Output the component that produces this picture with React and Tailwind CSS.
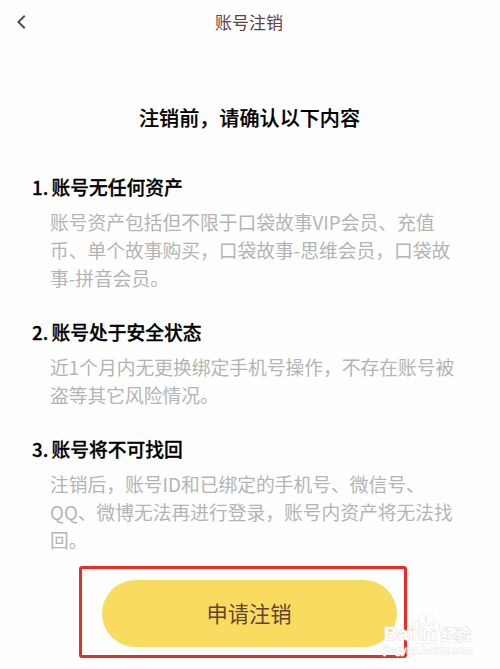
import React from "react";

const SECTIONS = [
  {
    title: "账号无任何资产",
    lines: ["账号资产包括但不限于口袋故事VIP会员、充值", "币、单个故事购买，口袋故事-思维会员，口袋故", "事-拼音会员。"],
  },
  {
    title: "账号处于安全状态",
    lines: ["近1个月内无更换绑定手机号操作，不存在账号被", "盗等其它风险情况。"],
  },
  {
    title: "账号将不可找回",
    lines: ["注销后，账号ID和已绑定的手机号、微信号、", "QQ、微博无法再进行登录，账号内资产将无法找", "回。"],
  },
];

function Section({ index, title, lines }) {
  return (
    <section>
      <h2 className="flex h-7 items-center text-[18.75px] font-medium leading-7 text-black [-webkit-text-stroke:0.3px_#000]">
        <span className="w-[19.5px]">{index}.</span>
        <span>{title}</span>
      </h2>
      <p className="mt-[7px] pl-[18px] text-[18.75px] font-normal leading-7 text-[#b4b4b4]">
        {lines.map((line) => (
          <span key={line} className="block whitespace-nowrap">{line}</span>
        ))}
      </p>
    </section>
  );
}

function Watermark() {
  return (
    <div className="absolute left-[384px] top-[613px] w-[90px] font-['Liberation_Sans','Noto_Sans_CJK_SC',sans-serif] text-white [-webkit-text-stroke:1.2px_#e2e2e2] [paint-order:stroke_fill]">
      <div className="flex h-8 items-end">
        <span className="w-[27px] pb-[2px] text-[19px] font-bold leading-[18px]">Bai</span>
        <span className="relative h-8 w-[30px]">
          <svg viewBox="0 0 30 32" className="h-8 w-[30px]" fill="#fff" stroke="#dedede" strokeWidth="1">
            <ellipse cx="5.2" cy="12.500" rx="3" ry="4" transform="rotate(-15 5.2 12.500)" />
            <ellipse cx="11.300" cy="6.200" rx="3.300" ry="4.600" />
            <ellipse cx="19" cy="6.500" rx="3.300" ry="4.600" transform="rotate(10 19 6.500)" />
            <ellipse cx="25.500" cy="13.500" rx="3" ry="4" transform="rotate(15 25.500 13.500)" />
            <path d="M15 12.500c-3 0-4 2.400-5.800 4.400C7.100 19 4 20.800 4 24.400c0 3.400 2.200 6 5 6 2.200 0 3.800-.6 6-.6s4 .6 6.200.6c2.800 0 5-2.600 5-6 0-3.600-3.200-5.400-5.200-7.500-1.800-2-3-4.400-6-4.400z" />
          </svg>
          <span className="absolute left-[7px] top-[15px] text-[14px] font-bold leading-[14px]">du</span>
        </span>
        <span className="whitespace-nowrap pb-[3px] text-[15px] font-bold leading-[15px]">经验</span>
      </div>
      <div className="-mt-px text-[11px] leading-3 [-webkit-text-stroke:0.8px_#e6e6e6]">jingyan.baidu.com</div>
    </div>
  );
}

export default function App() {
  return (
    <div className="relative h-[669px] w-[500px] overflow-hidden bg-[#fefefe] font-['Noto_Sans_CJK_SC',sans-serif]">
      <header className="grid h-11 grid-cols-[40px_1fr_42px] items-center text-[#5c4341]">
        <svg viewBox="0 0 10 16" className="ml-[16px] h-4 w-[10px]" fill="none" stroke="currentColor" strokeWidth="1.9">
          <path d="M8.700 1.800 2.400 8l6.300 6.200" />
        </svg>
        <h1 className="text-center text-[17px] leading-6">账号注销</h1>
      </header>

      <main className="pt-[60px]">
        <p className="pr-px text-center text-[20.1px] font-medium leading-7 text-black [-webkit-text-stroke:0.2px_#000]">注销前，请确认以下内容</p>
        <div className="mt-[41px] flex flex-col gap-[26px] pl-[32px]">
          {SECTIONS.map((s, i) => (
            <Section key={s.title} index={i + 1} {...s} />
          ))}
        </div>
        <div className="ml-[79px] mt-[12px] flex h-[92px] w-[328px] items-center justify-center rounded-[3px] border-[3px] border-[#ed2a23] pl-[12px] pt-[2px]">
          <button className="h-[67px] w-[295px] rounded-full bg-[#f8dc60] pb-px text-[21.3px] text-[#63432f]">申请注销</button>
        </div>
      </main>

      <Watermark />
    </div>
  );
}
